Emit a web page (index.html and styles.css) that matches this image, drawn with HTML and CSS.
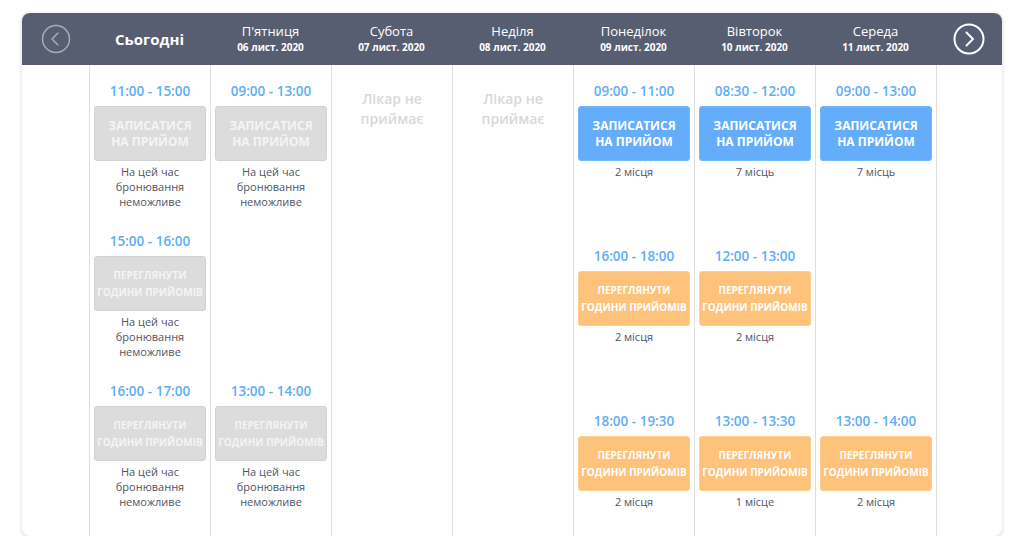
FILE: index.html
```
<!DOCTYPE html>
<html lang="uk">
  <head>
    <meta charset="UTF-8" />
    <meta name="viewport" content="width=device-width, initial-scale=1.0" />
    <title>Розклад прийому</title>
    <link rel="stylesheet" href="styles.css">
  </head>

  <body>
    <div class="schedule">
      <div class="schedule-head">
        <div class="nav">
          <button class="arrow arrow-prev" aria-label="Назад">
            <svg width="30" height="30" viewBox="0 0 30 30">
              <circle cx="15" cy="15" r="13.5" fill="none" stroke="#a9acb6" stroke-width="1.5" />
              <path d="M17 9 L11 15 L17 21" fill="none" stroke="#a9acb6" stroke-width="1.5" stroke-linecap="round" stroke-linejoin="round" />
            </svg>
          </button>
        </div>
        <div class="head-day head-today">Сьогодні</div>
        <div class="head-day"><span class="day-name">П'ятниця</span><span class="day-date">06 лист. 2020</span></div>
        <div class="head-day"><span class="day-name">Субота</span><span class="day-date">07 лист. 2020</span></div>
        <div class="head-day"><span class="day-name">Неділя</span><span class="day-date">08 лист. 2020</span></div>
        <div class="head-day"><span class="day-name">Понеділок</span><span class="day-date">09 лист. 2020</span></div>
        <div class="head-day"><span class="day-name">Вівторок</span><span class="day-date">10 лист. 2020</span></div>
        <div class="head-day"><span class="day-name">Середа</span><span class="day-date">11 лист. 2020</span></div>
        <div class="nav">
          <button class="arrow arrow-next" aria-label="Вперед">
            <svg width="32" height="32" viewBox="0 0 32 32">
              <circle cx="16" cy="16" r="14.5" fill="none" stroke="#ffffff" stroke-width="2" />
              <path d="M13.5 9.5 L20 16 L13.5 22.5" fill="none" stroke="#ffffff" stroke-width="2" stroke-linecap="round" stroke-linejoin="round" />
            </svg>
          </button>
        </div>
      </div>

      <div class="schedule-body">
        <div class="side"></div>

        <div class="day day-past">
          <div class="slot">
            <div class="slot-time">11:00 - 15:00</div>
            <button class="btn btn-off">Записатися<br>на прийом</button>
            <div class="slot-note">На цей час<br>бронювання<br>неможливе</div>
          </div>
          <div class="slot">
            <div class="slot-time">15:00 - 16:00</div>
            <button class="btn btn-off btn-small">Переглянути<br>години прийомів</button>
            <div class="slot-note">На цей час<br>бронювання<br>неможливе</div>
          </div>
          <div class="slot">
            <div class="slot-time">16:00 - 17:00</div>
            <button class="btn btn-off btn-small">Переглянути<br>години прийомів</button>
            <div class="slot-note">На цей час<br>бронювання<br>неможливе</div>
          </div>
        </div>

        <div class="day day-past">
          <div class="slot">
            <div class="slot-time">09:00 - 13:00</div>
            <button class="btn btn-off">Записатися<br>на прийом</button>
            <div class="slot-note">На цей час<br>бронювання<br>неможливе</div>
          </div>
          <div class="slot"></div>
          <div class="slot">
            <div class="slot-time">13:00 - 14:00</div>
            <button class="btn btn-off btn-small">Переглянути<br>години прийомів</button>
            <div class="slot-note">На цей час<br>бронювання<br>неможливе</div>
          </div>
        </div>

        <div class="day day-closed">Лікар не<br>приймає</div>
        <div class="day day-closed">Лікар не<br>приймає</div>

        <div class="day">
          <div class="slot">
            <div class="slot-time">09:00 - 11:00</div>
            <button class="btn btn-book">Записатися<br>на прийом</button>
            <div class="slot-note slot-places">2 місця</div>
          </div>
          <div class="slot">
            <div class="slot-time">16:00 - 18:00</div>
            <button class="btn btn-hours btn-small">Переглянути<br>години прийомів</button>
            <div class="slot-note slot-places">2 місця</div>
          </div>
          <div class="slot">
            <div class="slot-time">18:00 - 19:30</div>
            <button class="btn btn-hours btn-small">Переглянути<br>години прийомів</button>
            <div class="slot-note slot-places">2 місця</div>
          </div>
        </div>

        <div class="day">
          <div class="slot">
            <div class="slot-time">08:30 - 12:00</div>
            <button class="btn btn-book">Записатися<br>на прийом</button>
            <div class="slot-note slot-places">7 місць</div>
          </div>
          <div class="slot">
            <div class="slot-time">12:00 - 13:00</div>
            <button class="btn btn-hours btn-small">Переглянути<br>години прийомів</button>
            <div class="slot-note slot-places">2 місця</div>
          </div>
          <div class="slot">
            <div class="slot-time">13:00 - 13:30</div>
            <button class="btn btn-hours btn-small">Переглянути<br>години прийомів</button>
            <div class="slot-note slot-places">1 місце</div>
          </div>
        </div>

        <div class="day">
          <div class="slot">
            <div class="slot-time">09:00 - 13:00</div>
            <button class="btn btn-book">Записатися<br>на прийом</button>
            <div class="slot-note slot-places">7 місць</div>
          </div>
          <div class="slot"></div>
          <div class="slot">
            <div class="slot-time">13:00 - 14:00</div>
            <button class="btn btn-hours btn-small">Переглянути<br>години прийомів</button>
            <div class="slot-note slot-places">2 місця</div>
          </div>
        </div>

        <div class="side side-right"></div>
      </div>
    </div>
  </body>
</html>
```

FILE: styles.css
```
* {
  box-sizing: border-box;
}

body {
  margin: 0;
  padding: 13px 22px 0 22px;
  background-color: #ffffff;
  font-family: "Open Sans", "Noto Sans", sans-serif;
}

.schedule {
  width: 980px;
  border-radius: 8px;
  background-color: #ffffff;
  box-shadow: 0 1px 4px rgba(0, 0, 0, 0.18);
  padding-bottom: 4px;
}

.schedule-head,
.schedule-body {
  display: grid;
  grid-template-columns: 67px repeat(7, 121px) 66px;
}

.schedule-head {
  height: 52px;
  background-color: #585e72;
  border-radius: 8px 8px 0 0;
  color: #ffffff;
}

.nav {
  display: flex;
  justify-content: center;
  align-items: center;
}

.arrow {
  border: none;
  background: none;
  padding: 0;
  display: flex;
  cursor: pointer;
}

.head-day {
  display: flex;
  flex-direction: column;
  justify-content: center;
  align-items: center;
  text-align: center;
}

.head-today {
  font-size: 15px;
  font-weight: 700;
}

.day-name {
  font-size: 13px;
  line-height: 16px;
}

.day-date {
  font-size: 10px;
  font-weight: 700;
  line-height: 16px;
}

.schedule-body {
  height: 467px;
}

.day,
.side-right {
  border-left: 1px solid #dedede;
}

.day {
  padding-top: 16px;
}

.slot {
  height: 165px;
  display: flex;
  flex-direction: column;
  align-items: center;
}

.day-past .slot {
  height: 150px;
}

.slot-time {
  font-size: 13.5px;
  font-weight: 600;
  line-height: 20px;
  color: #5eadf9;
}

.btn {
  width: 112px;
  height: 55px;
  margin-top: 5px;
  border: 1px solid transparent;
  border-radius: 3px;
  font-family: inherit;
  font-size: 12px;
  font-weight: 700;
  line-height: 16px;
  text-transform: uppercase;
  white-space: nowrap;
  color: #ffffff;
  padding: 0;
}

.btn-small {
  font-size: 10px;
  line-height: 17px;
}

.btn-off {
  background-color: #dcdcdc;
  border-color: #d2d2d2;
  color: #f4f4f4;
}

.btn-book {
  background-color: #63adfb;
  border-color: #75b7fb;
}

.btn-hours {
  background-color: #fec27a;
  border-color: #fdcd92;
}

.slot-note {
  margin-top: 3px;
  font-size: 11px;
  line-height: 15px;
  color: #505564;
  text-align: center;
}

.day-closed {
  padding-top: 24px;
  text-align: center;
  font-size: 14px;
  font-weight: 600;
  line-height: 20px;
  color: #d9d9d9;
}
```
